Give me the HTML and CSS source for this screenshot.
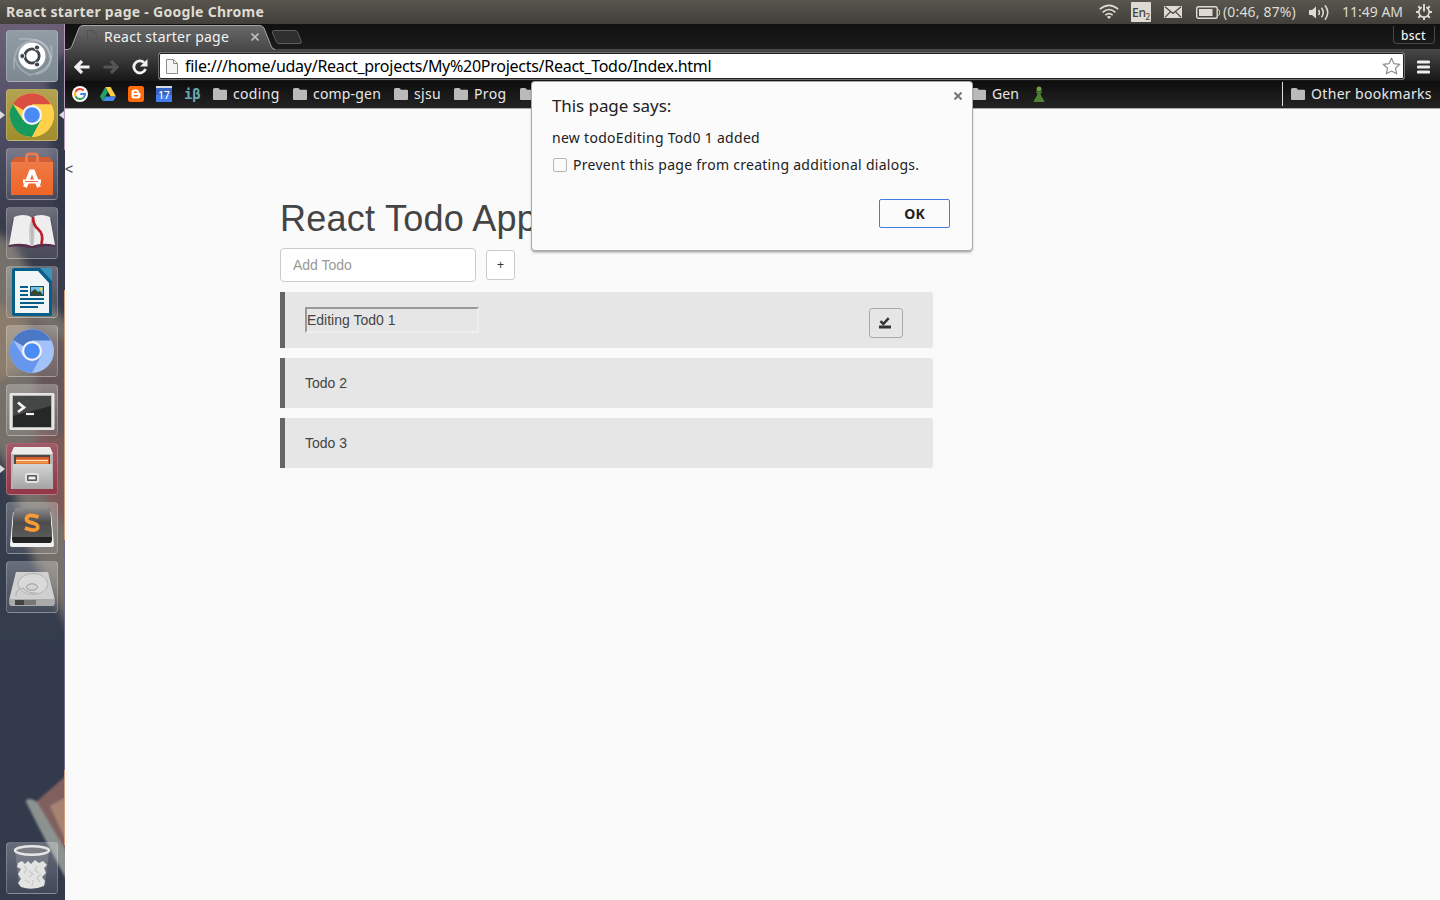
FILE: index.html
```
<!DOCTYPE html>
<html lang="en">
<head>
<meta charset="utf-8">
<title>React starter page</title>
<link rel="stylesheet" href="styles.css">
</head>
<body>
<svg width="0" height="0" class="defs">
  <defs>
    <linearGradient id="silver" x1="0" y1="0" x2="0" y2="1"><stop offset="0" stop-color="#d4d4d4"/><stop offset="1" stop-color="#a4a4a4"/></linearGradient>
    <linearGradient id="dark" x1="0" y1="0" x2="0" y2="1"><stop offset="0" stop-color="#8d8d8d"/><stop offset=".5" stop-color="#4c4c4c"/><stop offset="1" stop-color="#5a5a5a"/></linearGradient>
    <linearGradient id="orange" x1="0" y1="0" x2="0" y2="1"><stop offset="0" stop-color="#ef7b45"/><stop offset="1" stop-color="#ee6426"/></linearGradient>
    <linearGradient id="tabfill" x1="0" y1="0" x2="0" y2="1"><stop offset="0" stop-color="#6a6a6a"/><stop offset="1" stop-color="#484848"/></linearGradient>
    <linearGradient id="night" x1="0" y1="0" x2="0" y2="1"><stop offset="0" stop-color="#6b6078"/><stop offset=".14" stop-color="#494a60"/><stop offset=".24" stop-color="#383a4a"/><stop offset=".6" stop-color="#3a4050"/><stop offset=".7" stop-color="#323a4b"/><stop offset="1" stop-color="#323a4b"/></linearGradient>
    <filter id="soft" x="-20%" y="-20%" width="140%" height="140%"><feGaussianBlur stdDeviation="4"/></filter>
    <filter id="edge"><feGaussianBlur stdDeviation="1.2"/></filter>
    <symbol id="folder" viewBox="0 0 14 12"><path d="M0 1.5Q0 0 1.5 0H5Q6.3 0 6.8 1.7H13Q14 1.7 14 2.7V11Q14 12 13 12H1Q0 12 0 11Z" fill="#bababa"/></symbol>
  </defs>
</svg>
<div class="screen">
  <header class="panel">
    <span class="panel-title">React starter page - Google Chrome</span>
    <div class="indicators">
      <svg class="ind-wifi" width="20" height="16" viewBox="0 0 20 16" fill="none" stroke="#dfdbd2" stroke-width="1.600"><path d="M.8 5.200Q10-2.600 19.200 5.200M3.600 8.300Q10 2.700 16.400 8.300M6.300 11.100Q10 8 13.700 11.100"/><path d="M7.800 12.800Q10 11.400 12.200 12.800L10 15Z" fill="#dfdbd2" stroke="none"/></svg>
      <span class="ind-lang">En<sub>2</sub></span>
      <svg class="ind-mail" width="18" height="12" viewBox="0 0 18 12"><rect width="18" height="12" fill="#dfdbd2"/><path d="M1 .8L9 7.500 17 .8M1 11.300L6.500 5.700M17 11.300L11.500 5.700" fill="none" stroke="#45433e" stroke-width="1.200"/></svg>
      <svg class="ind-battery" width="24" height="13" viewBox="0 0 24 13"><rect x=".7" y=".7" width="20.500" height="11.600" rx="1.800" fill="none" stroke="#dfdbd2" stroke-width="1.400"/><rect x="3" y="3" width="13.500" height="7" fill="#dfdbd2"/><path d="M22.200 3.500Q23.600 3.500 23.600 6.500T22.200 9.500" fill="none" stroke="#dfdbd2"/></svg>
      <span class="ind-charge">(0:46, 87%)</span>
      <svg class="ind-sound" width="21" height="17" viewBox="0 0 21 17"><path d="M0 6H3L7 2.500V14.500L3 11H0Z" fill="#dfdbd2"/><path d="M9.500 6Q11.300 8.500 9.500 11M12.500 3.800Q16 8.500 12.500 13.200M16 1.200Q21.500 8.500 16 15.800" fill="none" stroke="#dfdbd2" stroke-width="1.500"/></svg>
      <span class="ind-clock">11:49 AM</span>
      <svg class="ind-gear" width="16" height="16" viewBox="0 0 16 16" fill="none" stroke="#dfdbd2"><path d="M5.800 3.300A5.200 5.200 0 1 0 10.200 3.300" stroke-width="1.700"/><path d="M8 0V7.500" stroke-width="1.900"/><path d="M0 8H3M13 8H16M8 13V16M2.300 2.300L4.300 4.300M13.700 2.300L11.700 4.300M2.300 13.700L4.300 11.700M13.700 13.700L11.700 11.700" stroke-width="2"/></svg>
    </div>
  </header>
  <div class="desktop">
    <nav class="launcher">
      <svg class="wallpaper" width="65" height="876" viewBox="0 24 65 876">
        <rect y="24" width="65" height="876" fill="url(#night)"/>
        <g filter="url(#soft)">
          <path d="M48 70L70 50V230H55Z" fill="#303849"/>
          <path d="M-10 232Q20 235 35 290L75 330V640Q55 600 45 580L20 530L-10 440Z" fill="#75706a"/>
          <path d="M-10 300L28 320 22 370 -10 385Z" fill="#8b7b6c"/>
          <path d="M30 320L75 345V460L40 440Z" fill="#66585a"/>
          <path d="M35 430L75 440V540L45 500Z" fill="#7d5a58"/>
          <path d="M-10 440L10 470 34 560 60 640H-10Z" fill="#343c4d"/>
        </g>
        <g filter="url(#edge)">
          <path d="M36 802L70 772V870Z" fill="#80605f"/>
          <path d="M50 806L70 795V850Z" fill="#a88372"/>
          <path d="M26 800Q31 797 37 802L70 858V886Q50 850 26 802Z" fill="#8c9290"/>
        </g>
        <path d="M64.500 24V150" stroke="#b99ab5"/>
        <path d="M64.500 290V540M64.500 770V845" stroke="#d59a76"/>
        <path d="M64.500 540V770" stroke="#75688a"/>
      </svg>
      <div class="tiles">
        <div class="tile tile-dash"><svg viewBox="0 0 52 52"><g fill="none" stroke="#fff" stroke-opacity=".22" stroke-width="2"><path d="M8 39Q6 12 30 10Q44 14 44 28"/><path d="M13 9Q40 6 45 28Q43 42 30 44"/><path d="M45 15Q50 40 24 45Q12 40 9 29"/></g><circle cx="26" cy="26" r="13.500" fill="#fff"/><circle cx="26" cy="26" r="7.200" fill="none" stroke="#3b444b" stroke-width="2.800"/><g fill="#3b444b" stroke="#fff" stroke-width=".9"><circle cx="16.300" cy="26" r="2.500"/><circle cx="31" cy="17.500" r="2.500"/><circle cx="31" cy="34.500" r="2.500"/></g></svg></div>
        <div class="tile tile-chrome"><svg viewBox="0 0 52 52"><circle cx="26" cy="26" r="22" fill="#ffd04a"/><path d="M26 26L6.900 15A22 22 0 0 1 45 15.500H26Z" fill="#d95043"/><path d="M6.900 15A22 22 0 0 0 26 48L35 31 26 26 17 31Z" fill="#169b5c"/><path d="M35 31L26 48A22 22 0 0 0 45.200 15.500H26Z" fill="#ffd04a"/><circle cx="26" cy="26" r="10" fill="#f5f5f5"/><circle cx="26" cy="26" r="7.800" fill="#4b8bf4"/></svg><i class="arrow arrow-left"></i><i class="arrow arrow-right"></i></div>
        <div class="tile"><svg viewBox="0 0 52 52"><path d="M5 14L9 9H43L47 14Z" fill="#d45d31"/><path d="M5 14H47V47H5Z" fill="url(#orange)"/><path d="M20.500 17V9Q20.500 6 23 6H29Q31.500 6 31.500 9V17" fill="none" stroke="#e77c54" stroke-width="3"/><path d="M19 39L25 23.500H27L33 39" fill="none" stroke="#fff" stroke-width="4"/><path d="M17 33.500H35" stroke="#fff" stroke-width="4"/><path d="M19 33.500H32" stroke="#ee6c31" stroke-width="1"/></svg></div>
        <div class="tile"><svg viewBox="0 0 52 52"><path d="M7 11L2.500 40Q14 38 23 41H29Q38 38 49.500 40L45 11Z" fill="#54304a"/><path d="M8 10Q18 6 26 10.500Q34 6 44 10L49 38Q36 35 26 39Q16 35 3 38Z" fill="#eee"/><path d="M26 11Q21 20 24 37L26 38.500 28 37Q30 20 26 11" fill="#cbcbcb"/><path d="M26 11V38" stroke="#aaa"/><path d="M27 10Q27 18 32 22Q38 27 35.500 37" fill="none" stroke="#b91f2d" stroke-width="2.800"/></svg></div>
        <div class="tile"><svg viewBox="0 0 52 52"><path d="M8 2H34L46 15V49Q46 50 44 50H8Q6 50 6 48V4Q6 2 8 2Z" fill="#075f89"/><path d="M9 5H32L43 17V47H9Z" fill="#f2f5f6"/><path d="M34 2H44Q46 2 46 4V15Z" fill="#3a93bd"/><path d="M14 21H22M14 25H22M14 29H22M14 33H38M14 37H38M14 41H32" stroke="#075f89" stroke-width="1.800"/><rect x="24.500" y="20.500" width="13" height="9" fill="#73c2e8" stroke="#154e66"/><path d="M25 29V26L29 23 32 26 34 25 37 29Z" fill="#38482b"/><circle cx="35" cy="23" r="1.500" fill="#ffd64b"/></svg></div>
        <div class="tile"><svg viewBox="0 0 52 52"><circle cx="26" cy="26" r="22" fill="#a3c2fa"/><path d="M26 26L6.900 15A22 22 0 0 1 45 15.500H26Z" fill="#4b78c6"/><path d="M6.900 15A22 22 0 0 0 26 48L35 31 26 26 17 31Z" fill="#6797ed"/><circle cx="26" cy="26" r="10" fill="#f5f5f5"/><circle cx="26" cy="26" r="7.800" fill="#4b8bf4"/></svg></div>
        <div class="tile"><svg viewBox="0 0 52 52"><rect x="3.500" y="9" width="45" height="37" rx="1.500" fill="#e5e5e3"/><rect x="6" y="11" width="40" height="33" fill="#b7b7b5"/><rect x="7" y="12" width="38" height="31" fill="#262727"/><path d="M7 12H45V22L7 32Z" fill="#454646"/><path d="M12 18.500L18 23.500 12 28" fill="none" stroke="#f2f2f2" stroke-width="2.800"/><path d="M20 30H28" stroke="#f2f2f2" stroke-width="2.200"/></svg></div>
        <div class="tile tile-files"><svg viewBox="0 0 52 52"><path d="M8 4H44L47 11V46H5V11Z" fill="#b5b5b3"/><path d="M8 4H44L47 11H5Z" fill="#ececeb"/><rect x="8" y="12" width="36" height="12" fill="#4b4744"/><rect x="10" y="14" width="33" height="9" fill="#d65a25"/><path d="M10 17.500H42" stroke="#ffe2b0" stroke-width="1.500"/><path d="M10 19.500H42" stroke="#ef9b46" stroke-width="2"/><rect x="7" y="21" width="39" height="25" fill="url(#silver)"/><rect x="20" y="31" width="12" height="8" rx="1.500" fill="#777" stroke="#e2e2e2" stroke-width="2"/><rect x="22" y="33" width="8" height="4" fill="#eee" stroke="#444"/></svg><i class="arrow arrow-left"></i></div>
        <div class="tile"><svg viewBox="0 0 52 52"><path d="M7 10L4 43Q4 45 6 45H46Q48 45 48 43L45 10Z" fill="#f2f2f2"/><path d="M10 6H42Q44 6 44 8L46 36Q46 41 44 41H8Q6 41 6 36L8 8Q8 6 10 6Z" fill="#232323"/><path d="M10 6H42Q44 6 44 8L46 35H6L8 8Q8 6 10 6Z" fill="url(#dark)"/><path d="M32.500 15Q22 11 20.500 16.500Q20 20 27 21Q33 22.500 31.500 26.500Q29 30 19 26" fill="none" stroke="#f99b35" stroke-width="3.800"/></svg></div>
        <div class="tile"><svg viewBox="0 0 52 52"><path d="M10 11H42L48.500 37V43Q48 45 46 45H6Q4 45 3.500 43V37Z" fill="#d0d0d0"/><path d="M3.500 38H48.500V43Q48 45 46 45H6Q4 45 3.500 43Z" fill="#aaa"/><path d="M9 39H30V44H9Z" fill="#777"/><path d="M9 39H18V44H9Z" fill="#444"/><ellipse cx="27" cy="23" rx="15" ry="10.500" fill="#d9d9d9" stroke="#b2b2b2"/><ellipse cx="26" cy="26" rx="5.500" ry="3.200" fill="#d4d4d4" stroke="#999"/><path d="M10 35Q9 29 17 27Q22 33 32 32" fill="none" stroke="#b5b5b5" stroke-width="1.200"/></svg></div>
      </div>
      <div class="tile tile-trash"><svg viewBox="0 0 52 52"><path d="M9 9L13 43Q26 49 39 43L43 9Z" fill="#a6adb2" fill-opacity=".35"/><path d="M12 21L16 19 19 22 22 19 25 22 29 18 33 21 37 19 41 23 38 26 40 31 36 35 39 39 38 44Q26 49 15 45L12 41 15 37 12 32 15 27 11 25Z" fill="#e2e4e2"/><path d="M18 24L21 27 18 31M23 29L27 32 23 35M31 24L29 28 33 31M35 32L31 36 34 40M19 38L24 41M27 38L26 44" fill="none" stroke="#c6caca" stroke-width="1.300"/><ellipse cx="26" cy="8.500" rx="17" ry="4.200" fill="#7a7f85" stroke="#e6e6e6" stroke-width="2.400"/></svg></div>
    </nav>
    <section class="browser">
      <div class="tabstrip">
        <svg class="tab-shape" width="236" height="26" viewBox="0 0 236 26"><path d="M0 25.500H3Q6 25 7 22L14 4Q15 1.500 18 1.500H194Q198 1.500 199 4L206 22Q207 25 210 25.500" fill="url(#tabfill)" stroke="#a5a5a5"/><path d="M209 6.500H230Q232 6.500 233 9L236 17Q237 19.500 235 19.500H214Q212 19.500 211 17L207.500 9Q207 6.500 209 6.500" fill="#2f2f2f" stroke="#5d5d5d"/></svg>
        <svg class="tab-page" width="10" height="13" viewBox="0 0 10 13"><path d="M.5.500H6L9.500 4V12.500H.5ZM6 .5V4H9.500" fill="none" stroke="#525252"/></svg>
        <span class="tab-title">React starter page</span>
        <svg class="tab-close" width="8" height="8" viewBox="0 0 8 8"><path d="M.5.500L7.500 7.500M7.500.500L.5 7.500" stroke="#bcbcbc" stroke-width="1.600"/></svg>
        <span class="profile">bsct</span>
      </div>
      <div class="toolbar">
        <svg class="nav-back" width="16" height="14" viewBox="0 0 16 14"><path d="M8 1L2 7 8 13M2 7H15.500" fill="none" stroke="#f1f1f1" stroke-width="3.200"/></svg>
        <svg class="nav-forward" width="16" height="14" viewBox="0 0 16 14"><path d="M8 1L14 7 8 13M14 7H.5" fill="none" stroke="#555" stroke-width="3.200"/></svg>
        <svg class="nav-reload" width="16" height="16" viewBox="0 0 16 16"><path d="M12 3.500A6 6 0 1 0 13.500 10" fill="none" stroke="#f1f1f1" stroke-width="2.800"/><path d="M15.500 0V7.500H8Z" fill="#f1f1f1"/></svg>
        <div class="omnibox">
          <svg class="omni-page" width="12" height="15" viewBox="0 0 12 15"><path d="M.5.500H7.500L11.500 4.500V14.500H.5ZM7.500.5V4.500H11.500" fill="#f5f5f5" stroke="#8d8d8d"/></svg>
          <span class="url">file:///home/uday/React_projects/My%20Projects/React_Todo/Index.html</span>
          <svg class="omni-star" width="19" height="18" viewBox="0 0 19 18"><path d="M9.500 1.200L12 6.700 17.800 7.300 13.500 11.300 14.700 16.800 9.500 14 4.300 16.800 5.500 11.300 1.200 7.300 7 6.700Z" fill="#fff" stroke="#8e8e8e" stroke-width="1.200" stroke-linejoin="round"/></svg>
        </div>
        <svg class="menu" width="13" height="14" viewBox="0 0 13 14"><path d="M1.500 2H11.500M1.500 7H11.500M1.500 12H11.500" stroke="#eee" stroke-width="3.200" stroke-linecap="round"/></svg>
      </div>
      <div class="bookmarks">
        <div class="sites">
          <svg width="16" height="16" viewBox="0 0 16 16"><circle cx="8" cy="8" r="8" fill="#fff"/><g fill="none" stroke-width="2"><path d="M11.600 4.500A5 5 0 0 0 3.500 5.800" stroke="#ea4335"/><path d="M3.500 5.800A5 5 0 0 0 3.500 10.200" stroke="#fbbc05"/><path d="M3.500 10.200A5 5 0 0 0 11.500 11.600" stroke="#34a853"/><path d="M11.500 11.600A5 5 0 0 0 13 8H8.300" stroke="#4285f4"/></g></svg>
          <svg width="16" height="16" viewBox="0 0 16 16"><path d="M5.300 1H10.600L16 10.500H10.700Z" fill="#ffcf48"/><path d="M5.300 1L8 5.700 2.700 15 0 10.500Z" fill="#1da362"/><path d="M5.500 10.500H16L13.300 15H2.700Z" fill="#4688f4"/></svg>
          <svg width="16" height="16" viewBox="0 0 16 16"><rect width="16" height="16" rx="2.500" fill="#ff6b08"/><path d="M6.300 3.500H8.500A2.300 2.300 0 0 1 10.800 6Q10.800 7 12.500 7.200V10A2.600 2.600 0 0 1 10 12.500H6A2.500 2.500 0 0 1 3.500 10V6.200A2.600 2.600 0 0 1 6.300 3.500Z" fill="#fff"/><path d="M6.300 6.200H8.300M6.300 9.800H9.700" stroke="#ff6b08" stroke-width="1.400" stroke-linecap="round"/></svg>
          <span class="calendar">17</span>
          <span class="ibeta">iβ</span>
        </div>
        <div class="folders">
          <span class="folder folder-coding"><svg width="14" height="12"><use href="#folder"/></svg><span class="label">coding</span></span>
          <span class="folder folder-comp"><svg width="14" height="12"><use href="#folder"/></svg><span class="label">comp-gen</span></span>
          <span class="folder folder-sjsu"><svg width="14" height="12"><use href="#folder"/></svg><span class="label">sjsu</span></span>
          <span class="folder folder-prog"><svg width="14" height="12"><use href="#folder"/></svg><span class="label">Prog</span></span>
          <span class="folder folder-hidden"><svg width="14" height="12"><use href="#folder"/></svg></span>
          <span class="folder folder-gen"><svg width="14" height="12"><use href="#folder"/></svg><span class="label">Gen</span></span>
          <svg class="pawn" width="12" height="17" viewBox="0 0 12 17"><circle cx="6" cy="3" r="2.500" fill="#6f9e45"/><path d="M3 5.500H9V7H7.500Q7.700 10.500 10 12.500L11.500 16H.5L2 12.500Q4.300 10.500 4.500 7H3Z" fill="#4f8132"/></svg>
        </div>
        <span class="folder folder-other"><svg width="14" height="12"><use href="#folder"/></svg><span class="label">Other bookmarks</span></span>
      </div>
      <main class="page">
        <span class="stray">&lt;</span>
        <div class="todo-app">
          <h1>React Todo App</h1>
          <div class="add-row"><input class="add-input" type="text" placeholder="Add Todo"><button class="add-button">+</button></div>
          <ul class="todos">
            <li class="todo todo-editing"><input class="edit-input" type="text" value="Editing Tod0 1"><button class="save-button"><svg width="12" height="12" viewBox="0 0 12 12"><path d="M1.500 4.200L4.300 7 9.700 1.200" fill="none" stroke="#333" stroke-width="2.500"/><path d="M0 8.500H12V11.500H0Z" fill="#333"/></svg></button></li>
            <li class="todo">Todo 2</li>
            <li class="todo">Todo 3</li>
          </ul>
        </div>
      </main>
      <div class="dialog">
        <div class="dialog-title">This page says:</div>
        <svg class="dialog-close" width="8" height="8" viewBox="0 0 8 8"><path d="M.5.500L7.500 7.500M7.500.500L.5 7.500" stroke="#777" stroke-width="2"/></svg>
        <div class="dialog-text">new todoEditing Tod0 1 added</div>
        <label class="dialog-check"><i class="box"></i><span>Prevent this page from creating additional dialogs.</span></label>
        <button class="ok">OK</button>
      </div>
    </section>
  </div>
</div>
</body>
</html>
```
FILE: styles.css
```
* { box-sizing: border-box; }
body { margin: 0; font-family: "Noto Sans", "Open Sans", sans-serif; background: #fafafa; }
.defs { position: absolute; }
svg { display: block; flex: none; }
.screen { width: 1440px; height: 900px; overflow: hidden; display: flex; flex-direction: column; }
.panel { height: 24px; flex: none; display: flex; align-items: center; justify-content: space-between; padding: 0 8px 0 6px; color: #dfdbd2; background: linear-gradient(#59564e, #403f3a); font-size: 14px; line-height: 20px; white-space: nowrap; }
.panel-title { font-weight: 700; letter-spacing: .28px; }
.indicators { display: flex; align-items: center; height: 24px; }
.ind-lang { width: 20px; height: 20px; margin-left: 12px; background: #dfdbd2; color: #45433e; border-radius: 1px; font-size: 12px; font-weight: 500; line-height: 21px; padding-left: 1px; letter-spacing: -.3px; }
.ind-lang sub { font-size: 8px; line-height: 0; }
.ind-mail { margin-left: 13px; }
.ind-battery { margin-left: 14px; }
.ind-charge { width: 73px; margin-left: 3px; letter-spacing: .16px; }
.ind-sound { margin-left: 13px; }
.ind-clock { width: 61px; margin-left: 12px; }
.ind-gear { margin-left: 13px; }

.desktop { flex: 1; display: flex; min-height: 0; }
.launcher { position: relative; width: 65px; flex: none; padding: 6px 0 6px 6px; display: flex; flex-direction: column; justify-content: space-between; overflow: hidden; }
.wallpaper { position: absolute; left: 0; top: 0; }
.tiles { display: flex; flex-direction: column; gap: 7px; }
.tile { position: relative; width: 52px; height: 52px; border-radius: 4px; border: 1px solid rgba(255, 255, 255, .22); background: linear-gradient(rgba(255, 255, 255, .26), rgba(255, 255, 255, .08)); }
.tile svg { width: 52px; height: 52px; margin: -1px; }
.tile-dash { background: linear-gradient(#929ca5, #7c8990); }
.tile-chrome { background: linear-gradient(#b3a252, #a18d2b); }
.tile-files { background: linear-gradient(#a05a66, #933648); }
.arrow { position: absolute; top: 21px; border: 4px solid transparent; }
.arrow-left { left: -7px; border-left: 5px solid #ddd; border-right: 0; }
.arrow-right { right: -7px; border-right: 5px solid #ddd; border-left: 0; }

.browser { position: relative; flex: 1; min-width: 0; display: flex; flex-direction: column; }
.tabstrip { position: relative; height: 25px; flex: none; display: flex; align-items: center; background: linear-gradient(#101010, #1b1b1b); color: #f2f2f2; font-size: 14px; white-space: nowrap; }
.tab-shape { position: absolute; left: 0; top: 0; overflow: visible; }
.tab-page { position: relative; margin-left: 22px; }
.tab-title { position: relative; width: 147px; margin-left: 7px; letter-spacing: .25px; }
.tab-close { position: relative; }
.profile { margin: -4px 5px 0 auto; width: 42px; height: 18px; border: 1px solid #484848; border-top: 0; border-radius: 0 0 4px 4px; font-size: 12px; font-weight: 500; line-height: 20px; padding-left: 7px; letter-spacing: .3px; }
.toolbar { height: 32px; flex: none; display: flex; align-items: center; padding: 3px 10px 0 9px; background: linear-gradient(#484848, #171717); }
.nav-forward { margin-left: 13px; }
.nav-reload { margin-left: 13px; }
.omnibox { flex: 1; height: 28px; margin: -1px 12px 0 10px; display: flex; align-items: center; padding: 0 3px 0 7px; background: #fff; border: 1px solid #6e6e6e; outline: 1px solid #222; outline-offset: -2px; border-radius: 3px; font-size: 16px; color: #000; }
.url { flex: 1; margin-left: 7px; white-space: nowrap; letter-spacing: -.27px; }
.bookmarks { height: 28px; flex: none; display: flex; align-items: center; padding: 0 0 1px 7px; background: linear-gradient(#0d0d0d, #242424); border-bottom: 1px solid #a9a9a9; color: #e8e8e8; font-size: 14px; white-space: nowrap; }
.sites { display: flex; align-items: center; gap: 12px; }
.calendar { width: 16px; height: 16px; background: linear-gradient(#d2d9e8 0 2px, #3563c4 2px 9px, #437df0 9px); color: #fff; font-size: 10px; font-weight: 500; line-height: 18px; text-align: center; }
.ibeta { width: 17px; font: 700 14px/16px "DejaVu Sans Mono", monospace; letter-spacing: -.2px; color: #66a9b4; }
.folders { display: flex; align-items: center; margin-left: 12px; }
.folder { display: flex; align-items: center; gap: 6px; height: 24px; }
.label { line-height: 20px; letter-spacing: .33px; }
.folder-coding { width: 80px; }
.folder-comp { width: 101px; }
.folder-comp .label { letter-spacing: .18px; }
.folder-sjsu { width: 60px; }
.folder-prog { width: 66px; }
.folder-hidden { width: 452px; }
.folder-gen { width: 61px; }
.folder-gen .label { letter-spacing: .08px; }
.folder-other { margin-left: auto; width: 158px; padding-left: 8px; border-left: 1px solid #ddd; }

.page { flex: 1; background: #fafafa; font-family: "Liberation Sans", Arial, sans-serif; font-size: 14px; line-height: 20px; color: #444; padding-top: 50px; }
.stray { display: block; height: 20px; }
.todo-app { margin: 20px 0 0 215px; width: 653px; }
.todo-app h1 { margin: 0 0 9px; font-size: 36px; font-weight: 400; line-height: 40px; letter-spacing: .25px; white-space: nowrap; }
.add-row { display: flex; align-items: center; gap: 10px; height: 34px; }
.add-input { width: 196px; height: 34px; padding: 6px 12px; border: 1px solid #ccc; border-radius: 4px; font: 14px "Liberation Sans", Arial, sans-serif; background: #fff; }
.add-input::placeholder { color: #999; opacity: 1; }
.add-button { width: 29px; height: 30px; padding: 0; border: 1px solid #ccc; border-radius: 3px; background: #fff; color: #333; font: 12px "Liberation Sans", Arial, sans-serif; }
.todos { list-style: none; margin: 10px 0 0; padding: 0; display: flex; flex-direction: column; gap: 10px; }
.todo { height: 50px; padding: 15px 30px 15px 20px; background: #e6e6e6; border-left: 5px solid #666; border-radius: 0 2px 2px 0; }
.todo-editing { height: 56px; display: flex; justify-content: space-between; }
.edit-input { width: 174px; height: 26px; padding: 1px 0; border: 2px solid; border-color: #999 #eee #eee #999; background: transparent; color: #444; font: 14px "Liberation Sans", Arial, sans-serif; }
.save-button { width: 34px; height: 30px; margin-top: 1px; padding: 0 0 0 9px; border: 1px solid #aaa; border-radius: 3px; background: #e6e6e6; }

.dialog { position: absolute; left: 467px; top: 58px; width: 440px; height: 168px; padding: 12px 20px; background: #fbfbfb; border-radius: 3px; box-shadow: 0 0 0 1px #aaa, 0 2px 3px rgba(0, 0, 0, .45); color: #222; white-space: nowrap; }
.dialog-title { font-size: 17px; line-height: 24px; letter-spacing: -.08px; }
.dialog-close { position: absolute; right: 10px; top: 10px; }
.dialog-text { margin-top: 10px; font-size: 14px; line-height: 20px; letter-spacing: .29px; }
.dialog-check { display: flex; align-items: center; gap: 6px; margin-top: 7px; font-size: 14px; line-height: 20px; letter-spacing: .28px; }
.box { width: 14px; height: 14px; margin-left: 1px; border: 1px solid #b5b5b5; border-radius: 2px; }
.ok { position: absolute; right: 22px; bottom: 22px; width: 71px; height: 29px; border: 1px solid #3f7be0; border-radius: 2px; background: #fbfbfb; color: #222; font: 700 14px "Noto Sans", sans-serif; }
```
